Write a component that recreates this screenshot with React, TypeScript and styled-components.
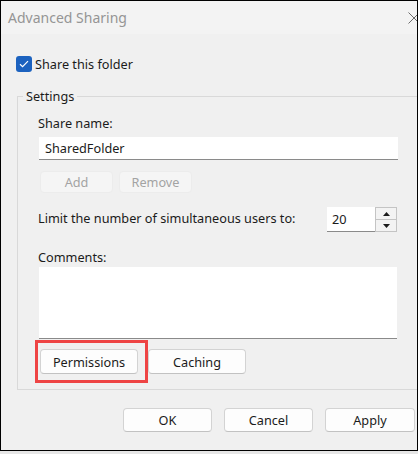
import React from 'react';
import styled, { createGlobalStyle } from 'styled-components';

const GlobalStyle = createGlobalStyle`
  html, body {
    margin: 0;
    padding: 0;
    background: #e6e6e6;
  }
  body {
    font-family: 'Noto Sans', 'Segoe UI', sans-serif;
    font-size: 12.7px;
    color: #1b1b1b;
  }
`;

const App = () => {
  return (
    <>
      <GlobalStyle />
      <Frame>
        <TitleBar>
          <TitleText>Advanced Sharing</TitleText>
          <CloseIcon width="12" height="12" viewBox="0 0 12 12">
            <path d="M0.5 0.5 L11.5 11.5 M11.5 0.5 L0.5 11.5" stroke="#6b6b6b" strokeWidth="1" />
          </CloseIcon>
        </TitleBar>

        <Body>
          <CheckRow>
            <CheckBox>
              <svg width="10" height="8" viewBox="0 0 10 8">
                <path d="M1 4.2 L3.6 6.6 L9 1.2" fill="none" stroke="#fff" strokeWidth="1.2" />
              </svg>
            </CheckBox>
            <span>Share this folder</span>
          </CheckRow>

          <GroupBox>
            <Legend>Settings</Legend>

            <FieldLabel $top={8}>Share name:</FieldLabel>
            <TextInput>SharedFolder</TextInput>

            <ButtonRow $top={11} $gap={6}>
              <SmallButton disabled $width={73}>Add</SmallButton>
              <SmallButton disabled $width={73}>Remove</SmallButton>
            </ButtonRow>

            <LimitRow>
              <span>Limit the number of simultaneous users to:</span>
              <Spinner>
                <SpinValue>20</SpinValue>
                <SpinButtons>
                  <SpinButton>
                    <svg width="7" height="4" viewBox="0 0 7 4">
                      <path d="M3.5 0 L7 4 L0 4 Z" fill="#1b1b1b" />
                    </svg>
                  </SpinButton>
                  <SpinButton>
                    <svg width="7" height="4" viewBox="0 0 7 4">
                      <path d="M0 0 L7 0 L3.5 4 Z" fill="#1b1b1b" />
                    </svg>
                  </SpinButton>
                </SpinButtons>
              </Spinner>
            </LimitRow>

            <FieldLabel $top={16}>Comments:</FieldLabel>
            <CommentBox />

            <ButtonRow $top={10} $gap={10}>
              <Highlighted>
                <Button $width={98} $height={25}>Permissions</Button>
                <HighlightBox />
              </Highlighted>
              <Button $width={98} $height={25}>Caching</Button>
            </ButtonRow>
          </GroupBox>

          <Footer>
            <Button $width={89} $height={24}>OK</Button>
            <Button $width={89} $height={24}>Cancel</Button>
            <Button $width={90} $height={24}>Apply</Button>
          </Footer>
        </Body>
      </Frame>
    </>
  );
};

export default App;

const Frame = styled.div`
  width: 418px;
  height: 451px;
  box-sizing: border-box;
  border: 1px solid #000;
  background: #f0f0f0;
  overflow: hidden;
  display: flex;
  flex-direction: column;
`;

const TitleBar = styled.div`
  height: 33px;
  flex-shrink: 0;
  background: #f3f3f3;
  display: flex;
  align-items: center;
  padding-left: 7px;
`;

const TitleText = styled.div`
  font-size: 14px;
  color: #959595;
`;

const CloseIcon = styled.svg`
  margin-left: auto;
  margin-right: -3px;
  flex-shrink: 0;
`;

const Body = styled.div`
  padding-left: 15px;
  width: 430px;
`;

const CheckRow = styled.div`
  display: flex;
  align-items: center;
  gap: 3px;
  height: 20px;
  margin-top: 20px;
`;

const CheckBox = styled.div`
  width: 16px;
  height: 16px;
  border-radius: 3px;
  background: #1c62bf;
  display: flex;
  align-items: center;
  justify-content: center;
`;

const GroupBox = styled.fieldset`
  margin: 12px 0 0 1px;
  padding: 0 0 15px 20px;
  border: 1px solid #d9d9d9;
  width: 420px;
  box-sizing: border-box;
  min-width: 0;
`;

const Legend = styled.legend`
  padding: 0 3px;
  margin-left: -15px;
  line-height: 20px;
`;

const FieldLabel = styled.div<{ $top: number }>`
  margin-top: ${(p) => p.$top}px;
  line-height: 19px;
`;

const TextInput = styled.div`
  margin-top: 4px;
  width: 359px;
  height: 23px;
  box-sizing: border-box;
  background: #fff;
  border-bottom: 1px solid #8a8a8a;
  padding-left: 6px;
  line-height: 22px;
  margin-left: 1px;
`;

const ButtonRow = styled.div<{ $top: number; $gap: number }>`
  display: flex;
  gap: ${(p) => p.$gap}px;
  margin-top: ${(p) => p.$top}px;
  margin-left: 2px;
`;

const SmallButton = styled.button<{ $width: number }>`
  width: ${(p) => p.$width}px;
  height: 22px;
  border: 1px solid #ececec;
  border-radius: 4px;
  background: #f5f5f5;
  color: #a3a3a3;
  font-family: inherit;
  font-size: 12.7px;
  padding: 0;
`;

const Button = styled.button<{ $width: number; $height: number }>`
  width: ${(p) => p.$width}px;
  height: ${(p) => p.$height}px;
  border: 1px solid #d3d3d3;
  border-bottom-color: #c2c2c2;
  border-radius: 4px;
  background: #fdfdfd;
  color: #1b1b1b;
  font-family: inherit;
  font-size: 12.7px;
  padding: 0;
`;

const LimitRow = styled.div`
  display: flex;
  align-items: center;
  justify-content: space-between;
  margin-top: 14px;
  width: 359px;

  & > span {
    margin-bottom: 4px;
  }
`;

const Spinner = styled.div`
  display: flex;
  height: 25px;
`;

const SpinValue = styled.div`
  width: 48px;
  background: #fff;
  border-bottom: 1px solid #8a8a8a;
  box-sizing: border-box;
  padding-left: 5px;
  line-height: 25px;
`;

const SpinButtons = styled.div`
  width: 22px;
  display: flex;
  flex-direction: column;
  border: 1px solid #c4c4c4;
  box-sizing: border-box;
  background: #f3f3f3;
`;

const SpinButton = styled.div`
  flex: 1;
  display: flex;
  align-items: center;
  justify-content: center;

  & + & {
    border-top: 1px solid #c4c4c4;
  }
`;

const CommentBox = styled.div`
  margin-top: 0;
  margin-left: 1px;
  width: 358px;
  height: 72px;
  box-sizing: border-box;
  background: #fff;
  border-bottom: 1px solid #8a8a8a;
`;

const Highlighted = styled.div`
  position: relative;
  display: flex;
`;

const HighlightBox = styled.div`
  position: absolute;
  left: -5px;
  top: -9px;
  width: 113px;
  height: 43px;
  box-sizing: border-box;
  border: 3px solid #ee4444;
  pointer-events: none;
`;

const Footer = styled.div`
  display: flex;
  gap: 12px;
  margin-top: 18px;
  padding-left: 107px;
`;
